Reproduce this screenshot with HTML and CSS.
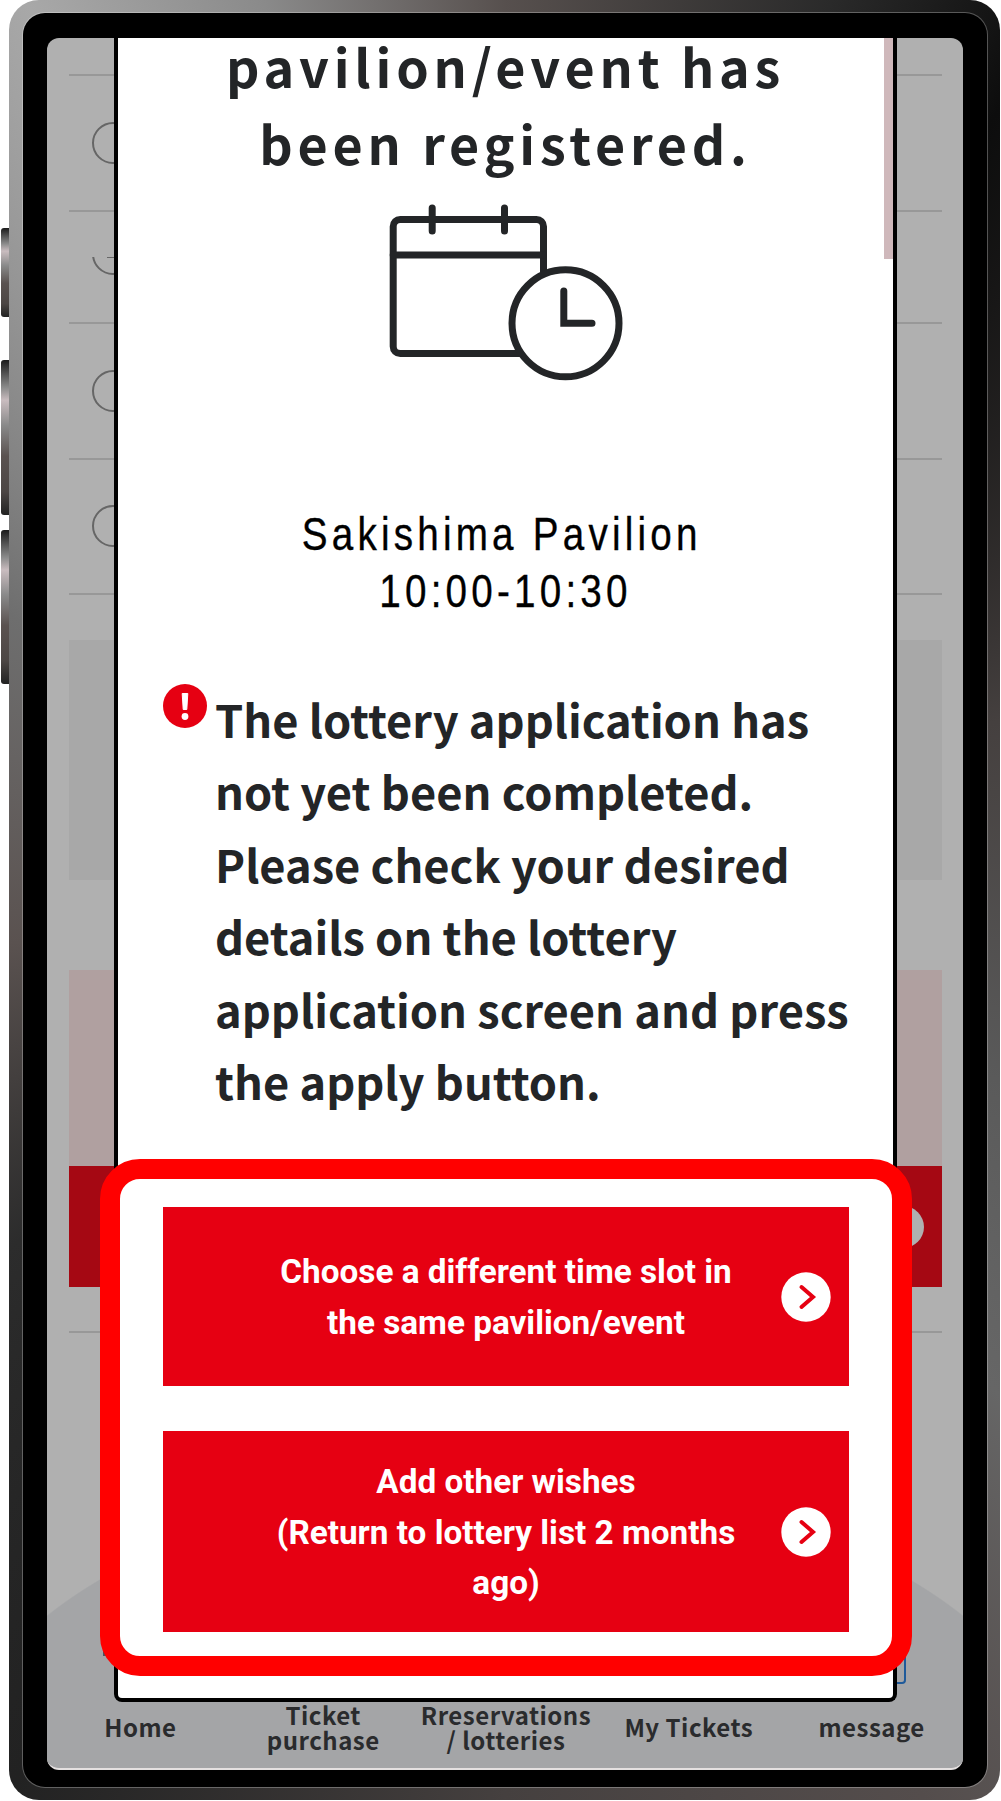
FILE: index.html
```html
<!DOCTYPE html>
<html lang="en">
<head>
<meta charset="utf-8">
<title>Reservation registered</title>
<link rel="stylesheet" href="styles.css">
</head>
<body>
<div class="device">
  <div class="sidekeys">
    <div class="key key-a"></div>
    <div class="key key-b"></div>
    <div class="key key-c"></div>
  </div>
  <div class="rim">
    <div class="bezel">
      <div class="screen">
        <div class="list">
          <div class="row row-first"></div>
          <div class="row row-a"><span class="radio"></span></div>
          <div class="row row-b"><div class="clip"><span class="tick"></span><span class="radio radio-up"></span></div></div>
          <div class="row row-a"><span class="radio"></span></div>
          <div class="row row-c"><span class="radio"></span></div>
          <div class="block-grey"></div>
          <div class="block-pink"></div>
          <div class="block-red"><span class="dim-dot"></span></div>
          <div class="row row-last"></div>
        </div>
        <nav class="tabbar">
          <div class="tab"><span class="home-icon"></span>Home</div>
          <div class="tab">Ticket<br>purchase</div>
          <div class="tab">Rreservations<br>/ lotteries</div>
          <div class="tab">My Tickets</div>
          <div class="tab"><span class="msg-icon"></span>message</div>
        </nav>

        <section class="modal">
          <h1 class="title">pavilion/event has<br>been registered.</h1>
          <svg class="cal" viewBox="0 0 240 185" width="240" height="185" aria-hidden="true">
            <g fill="none" stroke="#232527" stroke-width="7" stroke-linecap="round" stroke-linejoin="round">
              <rect x="7.2" y="19.5" width="150.3" height="134" rx="7"/>
              <path d="M7.2 55H157.5"/>
              <path d="M46.2 8V31M118.5 8V31"/>
              <circle cx="179.5" cy="123.3" r="53.5" fill="#fff"/>
              <path d="M177.8 91V123.3H206" stroke-linejoin="miter"/>
            </g>
          </svg>
          <p class="slot"><span class="slot-name">Sakishima Pavilion</span><br>10:00-10:30</p>
          <div class="notice">
            <svg class="alert" viewBox="0 0 44 44" width="44" height="44" aria-hidden="true">
              <circle cx="22" cy="22" r="22" fill="#e60012"/>
              <path d="M19.2 9.5h5.6l-1 16h-3.6z" fill="#fff" stroke="#fff" stroke-width="1" stroke-linejoin="round"/>
              <circle cx="22" cy="32.5" r="3.4" fill="#fff"/>
            </svg>
            <p class="notice-text">The lottery application has<br>not yet been completed.<br>Please check your desired<br>details on the lottery<br>application screen and press<br>the apply button.</p>
          </div>
          <span class="scrollbar"></span>
        </section>

        <div class="actions">
          <a class="btn btn-two">Choose a different time slot in the same pavilion/event
            <svg class="go" viewBox="0 0 50 50" width="50" height="50" aria-hidden="true"><circle cx="25" cy="25" r="24.7" fill="#fff"/><path d="M20.5 15 32 25 20.5 35" fill="none" stroke="#e60012" stroke-width="4" stroke-linecap="round" stroke-linejoin="miter"/></svg>
          </a>
          <a class="btn btn-three">Add other wishes<br>(Return to lottery list 2 months ago)
            <svg class="go" viewBox="0 0 50 50" width="50" height="50" aria-hidden="true"><circle cx="25" cy="25" r="24.7" fill="#fff"/><path d="M20.5 15 32 25 20.5 35" fill="none" stroke="#e60012" stroke-width="4" stroke-linecap="round" stroke-linejoin="miter"/></svg>
          </a>
        </div>
      </div>
    </div>
  </div>
</div>
</body>
</html>
```
FILE: styles.css
```css
* { box-sizing: border-box; }
html, body { margin: 0; padding: 0; background: #fff; }

.device { display: flex; width: 1001px; height: 1801px; }

.sidekeys { width: 8px; margin-left: 1px; padding-top: 228px; display: flex; flex-direction: column; }
.key {
  width: 100%;
  border-radius: 3px 0 0 3px;
  background: linear-gradient(180deg, #1b1b1b 0%, #8c8c8c 18%, #c9bcbf 26%, #8a8a8a 42%, #5a5250 62%, #4c4644 85%, #222 100%);
}
.key-a { height: 89px; }
.key-b { height: 155px; margin-top: 43px; }
.key-c { height: 154px; margin-top: 15px; }

.rim {
  width: 991px;
  height: 1800px;
  padding: 13px 13px 13px 14px;
  border-radius: 30px;
  background: conic-gradient(from 0deg, #57504e 0deg, #2a2a2a 20deg, #0d0d0d 32deg, #45403f 70deg, #5a5a5a 110deg, #666 135deg, #544d4c 155deg, #45403f 180deg, #222 209deg, #2c2c2c 235deg, #5a5250 265deg, #6e6e6e 300deg, #a8a8a8 332deg, #8a8a8a 345deg, #57504e 360deg);
}
.bezel {
  height: 100%;
  padding: 25px 24px 17px;
  background: #000;
  border-radius: 22px;
  box-shadow: 0 0 0 1px rgba(255, 255, 255, .28);
}
.screen {
  position: relative;
  display: flex;
  flex-direction: column;
  justify-content: space-between;
  height: 100%;
  overflow: hidden;
  background: #b0b0b0;
  border-radius: 12px;
  border-bottom: 2px solid #e4e0e0;
}

.list { padding: 0 21px 0 22px; }
.row { border-bottom: 2px solid #989898; }
.row-first { height: 38px; }
.row-a { height: 136px; padding: 46px 0 0 23px; }
.row-b { height: 112px; padding: 45px 0 0 23px; }
.row-c { height: 135px; padding: 45px 0 0 23px; }
.row-last { height: 46px; }

.radio {
  display: block;
  width: 42px;
  height: 42px;
  border: 2px solid #666;
  border-radius: 50%;
}
.clip { width: 42px; height: 19px; overflow: hidden; }
.tick { display: block; width: 14px; height: 1px; margin-left: 15px; background: #666; }
.radio-up { margin-top: -25px; }

.block-grey { height: 240px; margin-top: 45px; background: #a8a8a8; }
.block-pink { height: 196px; margin-top: 90px; background: #b0a0a0; }
.block-red { display: flex; align-items: center; justify-content: flex-end; height: 121px; padding-right: 18px; background: #a50813; }
.dim-dot { width: 42px; height: 42px; border-radius: 50%; background: #b0b0b0; }

.tabbar {
  position: relative;
  display: grid;
  grid-template-columns: repeat(5, 1fr);
  align-items: center;
  height: 286px;
  padding-top: 219px;
  padding-bottom: 15px;
  padding-left: 2px;
  background: radial-gradient(ellipse 560px 313px at 50% 313px, #a4a5a7 99.7%, transparent 100%);
}
.tab {
  position: relative;
  text-align: center;
  font: 700 24px/25.5px "Noto Sans CJK JP", "Noto Sans", sans-serif;
  letter-spacing: .5px;
  color: #2a2b2d;
}
.msg-icon {
  position: absolute;
  right: 57px;
  bottom: 56px;
  width: 60px;
  height: 40px;
  border: 2px solid #1f5a9a;
  border-radius: 4px;
}
.home-icon {
  position: absolute;
  left: 54px;
  bottom: 84px;
  width: 14px;
  height: 30px;
  background: #4a5560;
}

.modal {
  position: absolute;
  top: -11px;
  left: 67px;
  width: 783px;
  height: 1675px;
  border: 4px solid #000;
  border-top: 0;
  border-radius: 0 0 8px 8px;
  background: #fff;
  text-align: center;
}
.scrollbar { position: absolute; top: 0; right: 0; width: 9px; height: 232px; background: #cfb8bb; }

.title {
  margin: 0;
  font: 700 52px/77px "Noto Sans CJK JP", "Noto Sans", sans-serif;
  letter-spacing: 4.8px;
  color: #232527;
}
.cal { display: block; margin: 19px auto 0; }
.slot {
  margin: 121px 0 0;
  font: 400 46px/57px "Liberation Sans", sans-serif;
  letter-spacing: 5px;
  color: #000;
  -webkit-text-stroke: .35px #000;
  transform: scaleX(.84);
}
.slot-name { padding-right: 9px; }
.notice { display: flex; margin: 63px 0 0 45px; text-align: left; }
.alert { flex: none; margin-top: 1px; }
.notice-text {
  margin: 0 0 0 8px;
  font: 700 45.2px/72.4px "Noto Sans CJK JP", "Noto Sans", sans-serif;
  color: #232527;
}

.actions {
  position: absolute;
  top: 1121px;
  left: 53px;
  display: flex;
  flex-direction: column;
  gap: 45px;
  width: 812px;
  height: 517px;
  padding: 28px 43px 0;
  border: 20px solid #f00;
  border-radius: 40px;
  background: #fff;
}
.btn {
  position: relative;
  display: block;
  padding-left: 103px;
  padding-right: 103px;
  background: #e60012;
  color: #fff;
  text-align: center;
  font: 700 33.3px/50.5px Roboto, "Liberation Sans", sans-serif;
}
.btn-two { height: 179px; padding-top: 40px; }
.btn-three { height: 201px; padding-top: 26px; }
.go { position: absolute; top: 50%; right: 18px; margin-top: -25px; }
```
